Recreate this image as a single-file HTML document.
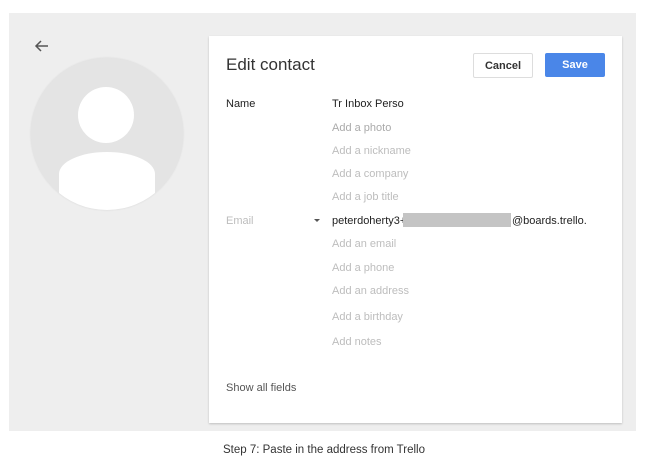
<!DOCTYPE html>
<html><head><style>
body{margin:0;width:651px;height:472px;background:#fff;position:relative;font-family:"Liberation Sans",Arial,sans-serif;overflow:hidden}
.bg{position:absolute;left:9px;top:13px;width:627px;height:418px;background:#eeeeee}
.card{position:absolute;left:209px;top:36px;width:413px;height:387px;background:#fff;box-shadow:0 1px 2px rgba(0,0,0,.2)}
.t{position:absolute;font-size:11px;white-space:nowrap;line-height:14px}
.g{color:#bdbdbd}
.d{color:#212121}
.btn{position:absolute;top:53px;height:24px;width:59px;font-size:11px;font-weight:bold;text-align:center;line-height:24px;border-radius:2px}
</style></head><body>
<div class="bg"></div>
<svg style="position:absolute;left:33px;top:38px" width="18" height="16" viewBox="0 0 18 16"><path d="M15 8H3M8 3L3 8l5 5" stroke="#555" stroke-width="1.5" fill="none"/></svg>
<div style="position:absolute;left:31px;top:58px;width:152px;height:152px;border-radius:50%;background:#e4e4e4;overflow:hidden;box-shadow:0 0 2px rgba(0,0,0,.1)">
<div style="position:absolute;left:47px;top:29px;width:56px;height:56px;border-radius:50%;background:#fff"></div>
<div style="position:absolute;left:28px;top:94px;width:96px;height:60px;border-radius:48px 48px 0 0/22px 22px 0 0;background:#fff"></div>
</div>
<div class="card"></div>
<div class="t d" style="left:226px;top:55px;font-size:17px;line-height:20px;color:#333">Edit contact</div>
<div class="btn" style="left:473px;border:1px solid #ddd;color:#333;background:#fff;width:58px;height:23px;line-height:24px">Cancel</div>
<div class="btn" style="left:545px;background:#4a86e8;color:#fff;width:60px;line-height:25px">Save</div>
<div class="t d" style="left:226px;top:97px">Name</div>
<div class="t d" style="left:332px;top:97px">Tr Inbox Perso</div>
<div class="t g" style="left:332px;top:121px;color:#aaa">Add a photo</div>
<div class="t g" style="left:332px;top:144px">Add a nickname</div>
<div class="t g" style="left:332px;top:167px">Add a company</div>
<div class="t g" style="left:332px;top:190px">Add a job title</div>
<div class="t g" style="left:226px;top:214px">Email</div>
<div style="position:absolute;left:314px;top:219px;width:0;height:0;border-left:3px solid transparent;border-right:3px solid transparent;border-top:3px solid #555"></div>
<div class="t d" style="left:332px;top:214px">peterdoherty3+</div>
<div style="position:absolute;left:403px;top:213px;width:108px;height:14px;background:#c4c4c4"></div>
<div class="t d" style="left:512px;top:214px">@boards.trello.</div>
<div class="t g" style="left:332px;top:237px">Add an email</div>
<div class="t g" style="left:332px;top:261px">Add a phone</div>
<div class="t g" style="left:332px;top:284px">Add an address</div>
<div class="t g" style="left:332px;top:310px">Add a birthday</div>
<div class="t g" style="left:332px;top:335px">Add notes</div>
<div class="t" style="left:226px;top:381px;color:#555">Show all fields</div>
<div class="t" style="left:223px;top:443px;color:#333;font-size:11.5px">Step 7: Paste in the address from Trello</div>
</body></html>
